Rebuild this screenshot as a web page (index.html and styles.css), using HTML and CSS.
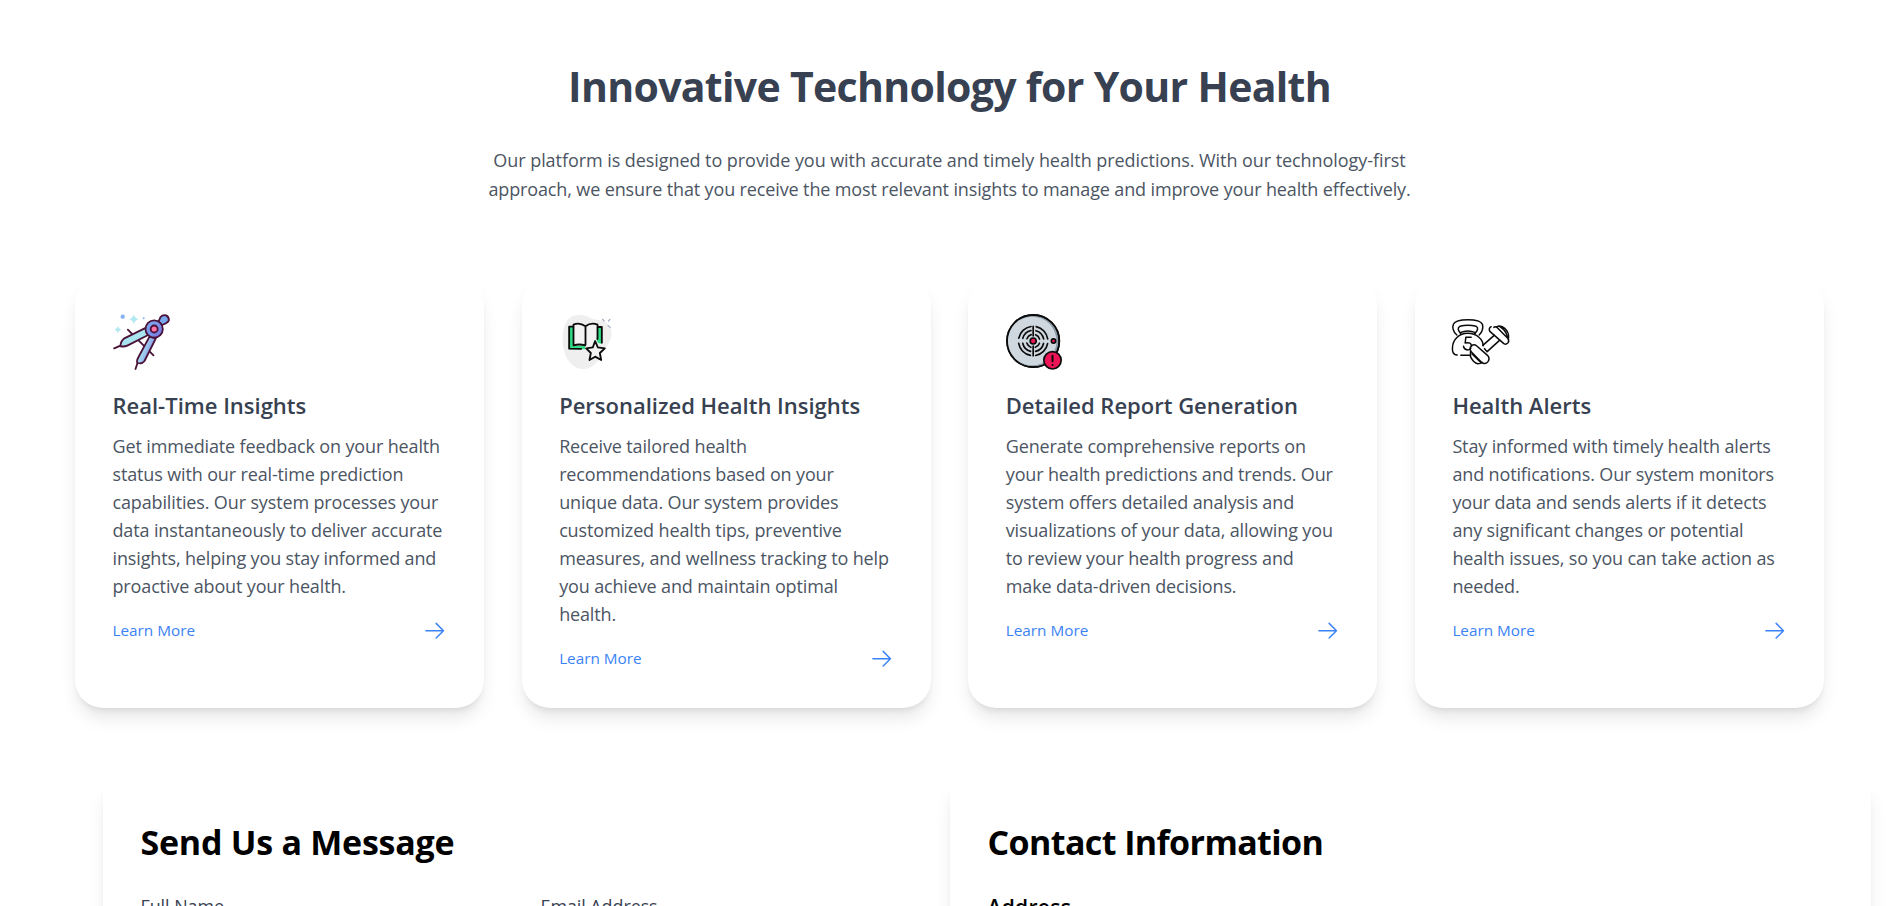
FILE: index.html
```html
<!DOCTYPE html>
<html lang="en">
<head>
<meta charset="utf-8">
<title>Innovative Technology for Your Health</title>
<link rel="stylesheet" href="styles.css">
</head>
<body>
<section class="features">
  <h2 class="headline">Innovative Technology for Your Health</h2>
  <p class="intro"><span class="intro-lead">Our platform is designed to provide you with accurate and timely health predictions. With our technology-first</span><br>approach, we ensure that you receive the most relevant insights to manage and improve your health effectively.</p>
  <div class="cards">
    <article class="card">
      <svg class="icon" viewBox="37.5 45 168.75 168.75" fill="none" stroke="#4a1237" stroke-width="5.5" stroke-linecap="round" stroke-linejoin="round">
        <defs>
          <linearGradient id="leg" x1="0" y1="0" x2="1" y2="0.5"><stop offset="0.35" stop-color="#a9e5ef"/><stop offset="1" stop-color="#8182e8"/></linearGradient>
          <linearGradient id="hub" x1="0" y1="0" x2="1" y2="1"><stop offset="0" stop-color="#7eb2f2"/><stop offset="1" stop-color="#7771e0"/></linearGradient>
        </defs>
        <g stroke="none">
          <circle cx="66.500" cy="53" r="6.500" fill="#86b3f2"/><circle cx="129.500" cy="57.500" r="3" fill="#86b3f2"/>
          <path fill="#b2e8f2" d="M100 46q2.500 11.500 14 15q-11.500 3.500-14 15q-2.500-11.500-14-15q11.500-3.500 14-15zM52 81q1.500 9 10 11q-8.500 2-10 11q-1.500-9-10-11q8.500-2 10-11z"/>
        </g>
        <path d="M82 92l77 77M41 148l21-9M111 192l-6 18"/>
        <path fill="#a9e5ef" d="M137 86L70 119Q60 127 60 142Q72 144 82 139L143 108Z"/>
        <path fill="url(#leg)" d="M147 113L114 174Q106 189 112 192Q124 196 132 186L166 118Z"/>
        <path fill="#7aa8ee" d="M174 68L180 54Q187 46 197 49Q206 54 205 64Q202 72 184 78Z"/>
        <circle cx="161" cy="90" r="26" fill="url(#hub)"/>
        <circle cx="161" cy="90" r="10.500" fill="#ff73a8"/>
      </svg>
      <h3 class="title">Real-Time Insights</h3>
      <p class="text">Get immediate feedback on your health<br>status with our real-time prediction<br>capabilities. Our system processes your<br>data instantaneously to deliver accurate<br>insights, helping you stay informed and<br>proactive about your health.</p>
      <a class="more">Learn More <svg class="arrow" viewBox="0 0 24 24"><path d="M13.500 4.500L21 12l-7.500 7.500M21 12H3"/></svg></a>
    </article>
    <article class="card">
      <svg class="icon" viewBox="27.500 45 168.75 168.75" fill="none" stroke="#0b0b0b" stroke-width="5.5" stroke-linecap="round" stroke-linejoin="round">
        <path stroke="none" fill="#efefef" d="M85 47C112 46 118 60 145 63C174 66 187 84 185 108C183 128 167 145 157 165C145 190 126 211 98 210C61 208 37 165 38 119C39 77 53 49 85 47Z"/>
        <path stroke="none" fill="#2fde84" d="M57 83H72V140H106V151H57ZM142 83H156V135L144 131L138 115Z"/>
        <path d="M72 83H58V149L94 149.500M143 84H156V131"/>
        <path fill="#f3f3f3" stroke="none" d="M71 77Q89 69 107 82Q124 69 143 77V120L136 115L126 139H106Q88 134 71 139Z"/>
        <path d="M143 120V77Q124 69 107 82Q89 69 71 77V139Q88 134 106 139M107 82V137"/>
        <path fill="#f3f3f3" d="M136 126L144 145L165 148L150 162L154 183L136 173L119 183L123 162L109 148L129 145Z"/>
        <path stroke="#a9b0c8" stroke-width="4" d="M158 61l5 5M180 61l-4 5M175 80l6 5"/>
      </svg>
      <h3 class="title">Personalized Health Insights</h3>
      <p class="text">Receive tailored health<br>recommendations based on your<br>unique data. Our system provides<br>customized health tips, preventive<br>measures, and wellness tracking to help<br>you achieve and maintain optimal<br>health.</p>
      <a class="more">Learn More <svg class="arrow" viewBox="0 0 24 24"><path d="M13.500 4.500L21 12l-7.500 7.500M21 12H3"/></svg></a>
    </article>
    <article class="card">
      <svg class="icon" viewBox="32.500 45 168.75 168.75" fill="none" stroke="#0b0b0b" stroke-width="5">
        <circle cx="114" cy="126" r="78.500" fill="#8a9aa6"/>
        <circle cx="111" cy="126" r="73" fill="#cfd8df" stroke="none"/>
        <circle cx="114" cy="126" r="78.500"/>
        <g stroke-linecap="round">
          <circle cx="114" cy="126" r="44" stroke-dasharray="53 16.115" stroke-dashoffset="-8"/>
          <circle cx="114" cy="126" r="32" stroke-dasharray="35 15.265" stroke-dashoffset="-7.600"/>
          <circle cx="114" cy="126" r="20" stroke-dasharray="18 13.416" stroke-dashoffset="-6.700"/>
          <path d="M114 82V111M114 141V170"/>
        </g>
        <circle cx="114" cy="126" r="9" fill="#ed1556"/>
        <circle cx="175" cy="126" r="6.500" fill="#ed1556"/>
        <circle cx="172" cy="184" r="26" fill="#ed1556"/>
        <path stroke-width="6" stroke-linecap="round" d="M172 170V187M172 198v.1"/>
      </svg>
      <h3 class="title">Detailed Report Generation</h3>
      <p class="text">Generate comprehensive reports on<br>your health predictions and trends. Our<br>system offers detailed analysis and<br>visualizations of your data, allowing you<br>to review your health progress and<br>make data-driven decisions.</p>
      <a class="more">Learn More <svg class="arrow" viewBox="0 0 24 24"><path d="M13.500 4.500L21 12l-7.500 7.500M21 12H3"/></svg></a>
    </article>
    <article class="card">
      <svg class="icon" viewBox="36.500 45 168.75 168.75" fill="none" stroke="#0b0b0b" stroke-width="4.500" stroke-linecap="round" stroke-linejoin="round">
        <path d="M51 108C39 98 37 84 41 75Q47 62 84 62Q122 62 128 76C131 89 127 99 118 108"/>
        <path d="M61 101C54 94 53 86 60 82Q84 76 109 82C116 86 114 94 107 101"/>
        <path d="M61 101Q84 91 107 101M61 101L64 106M107 101L104 106M52 168C38 168 37 153 38 145C39 122 57 103 84 103C111 103 130 122 130 140M63 169H89"/>
        <path d="M94 115H78L76 132Q95 128 95 142M71 142Q73 152 83 153Q90 152 93 148"/>
        <path d="M129 139L163 109M142 158L179 124M134 149L142 158"/>
        <path d="M95 140Q103 134 111 141L143 169Q151 178 145 187Q136 199 125 190L94 158Q87 148 95 140Z"/>
        <path d="M92 156V173Q101 192 114 194Q122 194 127 190M97 165L122 190"/>
        <path d="M154 83Q145 88 150 97L192 134Q200 138 205 131Q209 123 203 117L171 85Q166 82 162 85"/>
        <path d="M170 84Q177 79 187 83Q204 93 206 108V118M180 83Q199 94 202 113"/>
      </svg>
      <h3 class="title">Health Alerts</h3>
      <p class="text">Stay informed with timely health alerts<br>and notifications. Our system monitors<br>your data and sends alerts if it detects<br>any significant changes or potential<br>health issues, so you can take action as<br>needed.</p>
      <a class="more">Learn More <svg class="arrow" viewBox="0 0 24 24"><path d="M13.500 4.500L21 12l-7.500 7.500M21 12H3"/></svg></a>
    </article>
  </div>
</section>
<section class="contact">
  <div class="panel">
    <h2 class="panel-title">Send Us a Message</h2>
    <div class="fields">
      <label class="label">Full Name</label>
      <label class="label">Email Address</label>
    </div>
  </div>
  <div class="panel">
    <h2 class="panel-title panel-title-info">Contact Information</h2>
    <h3 class="address">Address</h3>
  </div>
</section>
</body>
</html>
```
FILE: styles.css
```css
* { box-sizing: border-box; margin: 0; padding: 0; }
body {
  height: 906px;
  overflow: hidden;
  background: #fff;
  font-family: "Open Sans", "Noto Sans", sans-serif;
  white-space: nowrap;
}
.features { width: 1824px; padding: 63.4px 0 0 75px; }
.headline {
  font-size: 41px;
  line-height: 47px;
  font-weight: 700;
  letter-spacing: -0.68px;
  text-align: center;
  color: #374151;
}
.intro {
  margin-top: 35.6px;
  font-size: 18px;
  line-height: 29px;
  letter-spacing: -0.13px;
  text-align: center;
  color: #4b5563;
}
.intro-lead { letter-spacing: -0.06px; }
.cards {
  display: grid;
  grid-template-columns: repeat(4, 1fr);
  gap: 37.5px;
  margin-top: 73px;
}
.card {
  display: flex;
  flex-direction: column;
  padding: 37.5px;
  border-radius: 28px;
  background: #fff;
  box-shadow: 0 11.7px 17.6px -3.5px rgba(0, 0, 0, 0.1), 0 4.7px 7px -4.7px rgba(0, 0, 0, 0.1);
}
.icon { display: block; width: 56.25px; height: 56.25px; overflow: visible; }
.title {
  margin-top: 18.75px;
  font-size: 22px;
  line-height: 32.8px;
  font-weight: 600;
  color: #374151;
}
.text {
  margin-top: 9.4px;
  font-size: 18px;
  line-height: 28.125px;
  letter-spacing: -0.14px;
  color: #4b5563;
}
.more {
  display: flex;
  align-items: center;
  justify-content: space-between;
  margin-top: 18.75px;
  font-size: 15.3px;
  line-height: 23.4px;
  color: #3b82f6;
}
.arrow {
  width: 23.4px;
  height: 23.4px;
  fill: none;
  stroke: #3b82f6;
  stroke-width: 1.5;
  stroke-linecap: round;
  stroke-linejoin: round;
}
.contact {
  display: grid;
  grid-template-columns: 847px 921px;
  padding: 75px 0 0 103px;
}
.panel {
  height: 500px;
  padding: 37.5px;
  border-radius: 9.4px;
  background: #fff;
  box-shadow: 0 11.7px 17.6px -3.5px rgba(0, 0, 0, 0.1), 0 4.7px 7px -4.7px rgba(0, 0, 0, 0.1);
}
.panel-title {
  font-size: 34px;
  line-height: 42px;
  font-weight: 700;
  letter-spacing: -0.25px;
  color: #000;
}
.panel-title-info { letter-spacing: -0.6px; }
.fields { display: grid; grid-template-columns: 400px 1fr; margin-top: 29px; }
.label { font-size: 17.9px; line-height: 28px; letter-spacing: -0.05px; color: #374151; }
.address { margin-top: 28.5px; font-size: 21px; line-height: 32px; font-weight: 600; letter-spacing: 0.3px; color: #000; }
```
